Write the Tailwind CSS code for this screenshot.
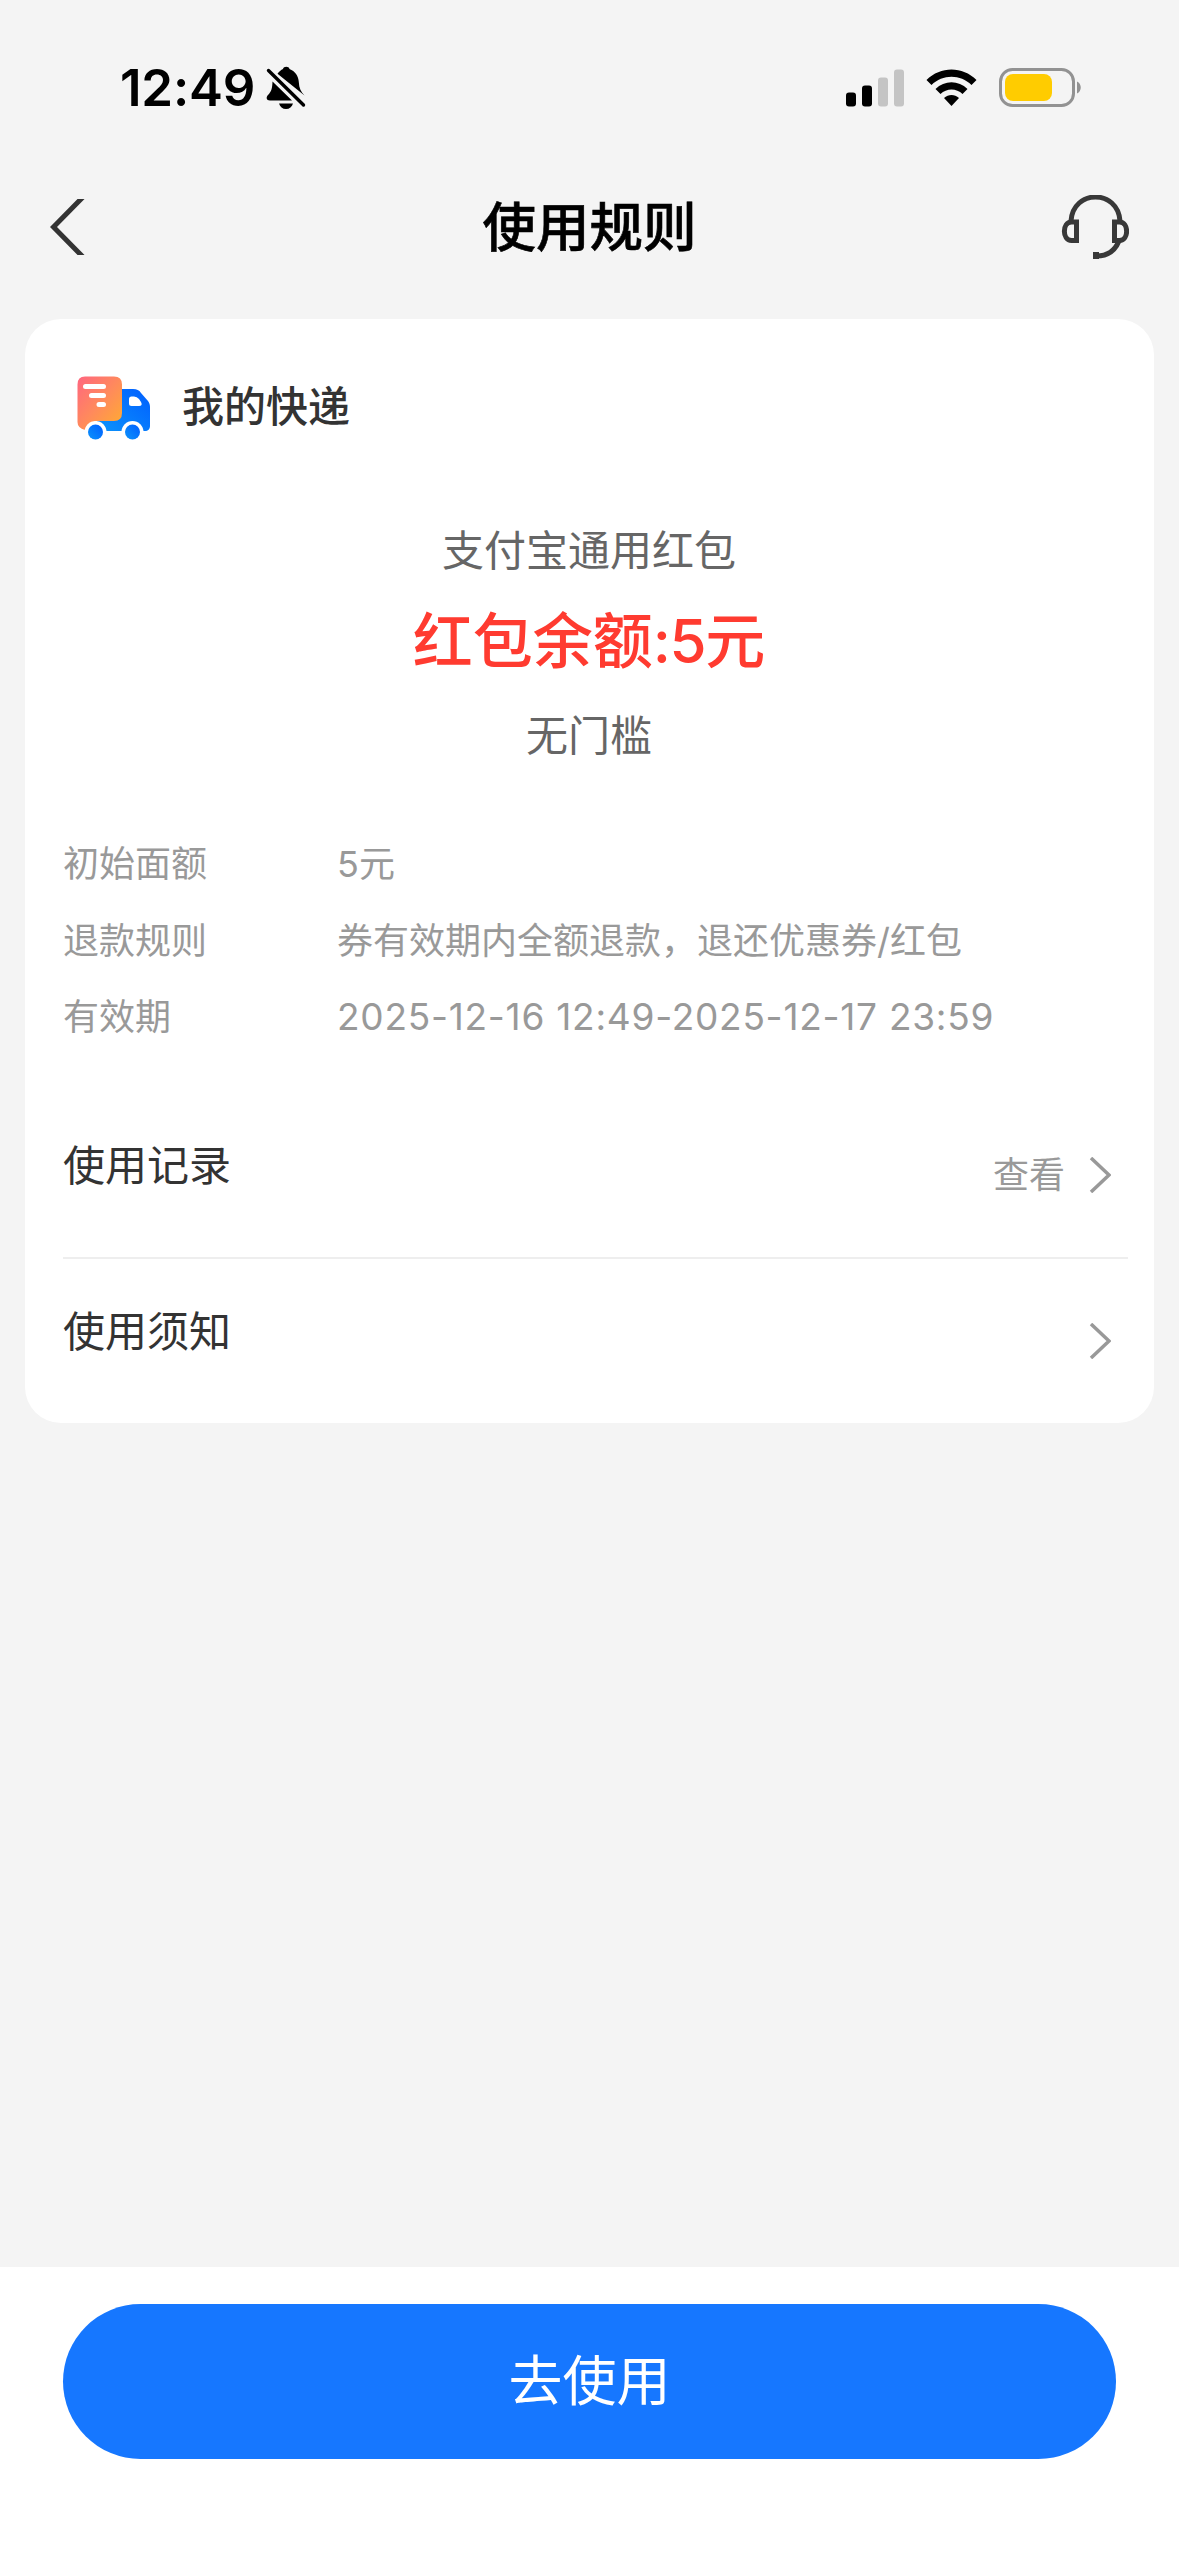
<!DOCTYPE html>
<html lang="zh-CN">

<head>
    <meta charset="UTF-8">
    <meta name="viewport" content="width=device-width, initial-scale=1.0">
    <title>使用规则</title>
    <script src="https://cdn.jsdelivr.net/npm/@tailwindcss/browser@4"></script>
</head>

<body class="flex h-[2556px] w-[1179px] flex-col bg-[#f4f4f4] font-['Inter','Noto_Sans_CJK_SC',sans-serif] text-[#333333]">
    <!-- status bar -->
    <div class="flex h-[177px] items-start justify-between pt-[68px] pr-[97px] pl-[120px]">
        <div class="flex h-10 items-center gap-[11px]">
            <span class="text-[51px] leading-10 font-semibold tracking-[-0.2px] text-black">12:49</span>
            <svg class="h-[44px] w-[40px]" viewBox="0 0 40 44" fill="none">
                <path d="M11.500 7.800C13 5.500 15 4 17 3C17.500 0 23 0 23.500 3C29 5 32.500 10 32.800 16C33 22 35 26 38.500 29.500Z" fill="#000" />
                <path d="M6.500 15.500L26 34.500H4C0 34.500 0 31 2 29C5.500 25.500 6.300 22 6.500 15.500Z" fill="#000" />
                <path d="M13 37.500H27C26 41 23.500 43 20 43S14 41 13 37.500Z" fill="#000" />
                <path d="M2.500 4.500L37.500 39" stroke="#000" stroke-width="3.400" stroke-linecap="round" />
            </svg>
        </div>
        <div class="flex h-10 items-center gap-[22px]">
            <svg class="h-[38px] w-[58px]" viewBox="0 0 58 38">
                <rect x="0" y="23.500" width="10" height="14" rx="3" />
                <rect x="16" y="16.500" width="10" height="21" rx="3" />
                <rect x="32" y="8.500" width="10" height="29" rx="3" fill="#c4c4c4" />
                <rect x="48" y="0.500" width="10" height="37" rx="3" fill="#c4c4c4" />
            </svg>
            <svg class="h-[38px] w-[51px]" viewBox="0 0 51 38">
                <path d="M0.500 11C14.500-3 36.500-3 50.500 11L45.500 16C34.500 5 16.500 5 5.500 16Z" />
                <path d="M9.500 20C18.500 11 32.500 11 41.500 20L36.500 25C30.500 19 20.500 19 14.500 25Z" />
                <path d="M18 29C22.500 25 28.500 25 33 29L25.500 37Z" />
            </svg>
            <svg class="h-[40px] w-[83px]" viewBox="0 0 83 40">
                <rect x="1.500" y="1.500" width="73" height="36" rx="12" fill="none" stroke="#929292" stroke-width="3" />
                <rect x="6" y="6" width="47" height="27" rx="8" fill="#ffcc00" />
                <path d="M78 13.500C83 15.500 83 23.500 78 25.500Z" fill="#929292" />
            </svg>
        </div>
    </div>

    <!-- nav bar -->
    <header class="flex h-[142px] items-start justify-between pr-[50px] pl-[50px]">
        <svg class="mt-[22px] h-[56px] w-[80px]" viewBox="0 0 80 56" fill="none">
            <path d="M33-2L3.500 28L33 58" stroke="#333" stroke-width="5" />
        </svg>
        <h1 class="mt-[23px] text-[53.5px] leading-[56px] font-medium text-black [-webkit-text-stroke:0.6px_#000]">使用规则</h1>
        <div class="flex w-[80px] justify-end">
            <svg class="mt-[18px] h-[66px] w-[68px]" viewBox="0 0 68 66" fill="none" stroke="#383838" stroke-width="5">
                <path d="M10 26C12-6 57-6 59 26" />
                <path d="M15.500 27H10.500C1 27 1 45.500 10.500 45.500H15.500Z" />
                <path d="M53.500 27H58.500C68 27 68 45.500 58.500 45.500H53.500Z" />
                <path d="M58 46C54 55.500 46 61.500 34 61" />
                <path d="M32 60.500H38" stroke-width="7" />
            </svg>
        </div>
    </header>

    <!-- coupon card -->
    <main class="mx-[25px] h-[1104px] rounded-[36px] bg-white pt-[53px] pr-[26px] pl-[38px]">
        <div class="flex h-[72px] items-center pl-[14px]">
            <svg class="h-[64px] w-[74px]" viewBox="0 0 74 64">
                <defs>
                    <linearGradient id="box" x1="0" y1="0" x2="1" y2="1">
                        <stop offset="0" stop-color="#ff6680" />
                        <stop offset="0.500" stop-color="#ff8a5c" />
                        <stop offset="1" stop-color="#ffae2e" />
                    </linearGradient>
                    <linearGradient id="cab" x1="0" y1="1" x2="1" y2="0">
                        <stop offset="0" stop-color="#0c94fb" />
                        <stop offset="1" stop-color="#005eff" />
                    </linearGradient>
                </defs>
                <path d="M20 13H56C60 13 62 14 64 17L71 25C72.500 27 73 29 73 31V50C73 53 71 55 68 55H20Z" fill="url(#cab)" />
                <path d="M8 0.500H37Q45 0.500 45 8.500V37Q45 45 37 45H18L8 54Q0.500 52 0.500 46V8.500Q0.500 0.500 8 0.500Z" fill="url(#box)" />
                <path d="M52 23Q52 20.500 54.500 20.500H57Q60 20.500 62 23L64 26Q66 30 62 30H54.500Q52 30 52 27.500Z" fill="#fff" />
                <circle cx="18.500" cy="56" r="11" fill="#fff" />
                <circle cx="55.500" cy="56" r="11" fill="#fff" />
                <circle cx="18.500" cy="56" r="7.500" fill="url(#cab)" />
                <circle cx="55.500" cy="56" r="7.500" fill="url(#cab)" />
                <path d="M8.500 10.500H26.500M14.500 19.500H26.500M22 28.500H26.500" stroke="#fff" stroke-width="5" stroke-linecap="round" />
            </svg>
            <span class="mb-[2px] ml-[31px] text-[42px] leading-[60px] font-medium">我的快递</span>
        </div>

        <div class="flex h-[380px] flex-col items-center pt-[77px] pr-[13px]">
            <p class="text-[42px] leading-[60px] text-[#666666]">支付宝通用红包</p>
            <p class="mt-[18px] text-[60px] leading-[84px] font-medium text-[#ff3b30]">红包余额<span class="tracking-[-1.5px]">:5</span>元</p>
            <p class="mt-[23px] text-[42px] leading-[60px] text-[#666666]">无门槛</p>
        </div>

        <div class="grid grid-cols-[274px_1fr] gap-y-[26.500px] pt-[15px] text-[36px] leading-[50px] text-[#999999]">
            <span>初始面额</span>
            <span>5元</span>
            <span>退款规则</span>
            <span>券有效期内全额退款，退还优惠券/红包</span>
            <span>有效期</span>
            <span class="text-[37px] tracking-[0.75px]">2025-12-16 12:49-2025-12-17 23:59</span>
        </div>

        <div class="mt-[50px] flex h-[167px] items-center justify-between border-b-2 border-[#eeeeee] pr-[17px]">
            <span class="mb-[19px] text-[42px]">使用记录</span>
            <div class="flex items-center gap-[24px]">
                <span class="text-[36px] text-[#999999]">查看</span>
                <svg class="h-[36px] w-[22px]" viewBox="0 0 22 36" fill="none">
                    <path d="M2 1L20 18L2 35" stroke="#999" stroke-width="3.500" />
                </svg>
            </div>
        </div>
        <div class="flex h-[165px] items-center justify-between pr-[17px]">
            <span class="mb-[20px] text-[42px]">使用须知</span>
            <svg class="mb-[2px] h-[36px] w-[22px]" viewBox="0 0 22 36" fill="none">
                <path d="M2 1L20 18L2 35" stroke="#999" stroke-width="3.500" />
            </svg>
        </div>
    </main>

    <!-- bottom action -->
    <footer class="mt-auto h-[289px] bg-white px-[63px] pt-[37px]">
        <button class="flex h-[155px] w-full items-center justify-center rounded-full bg-[#1677ff] text-[54px] text-white">去使用</button>
    </footer>
</body>

</html>
